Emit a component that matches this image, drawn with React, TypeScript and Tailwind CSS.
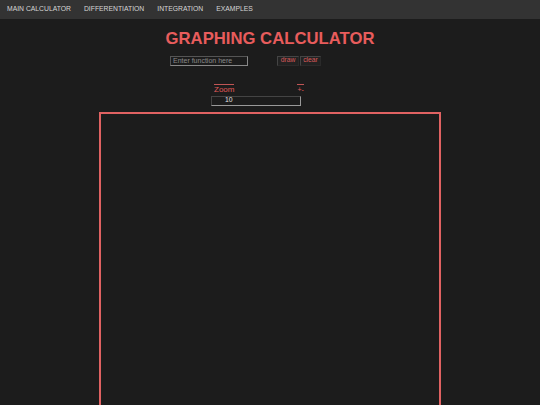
import React from "react";

export default function App() {
  const font = { fontFamily: '"Liberation Sans", Arial, sans-serif' };
  return (
    <div className="w-[540px] h-[405px] overflow-hidden bg-[#1c1c1c]" style={font}>
      <nav className="h-[19px] bg-[#333333] flex items-center text-[6.8px] text-[#d6d6d6] leading-none">
        <span className="ml-[7px]">MAIN CALCULATOR</span>
        <span className="ml-[13px]">DIFFERENTIATION</span>
        <span className="ml-[13px]">INTEGRATION</span>
        <span className="ml-[13px]">EXAMPLES</span>
      </nav>
      <h1 className="mt-[12px] text-center text-[16.7px] leading-none font-bold text-[#e85c5c]">
        GRAPHING CALCULATOR
      </h1>
      <div className="mt-[8px] flex items-center h-[10px]">
        <div className="ml-[170px] w-[78px] h-[10px] border border-t-[#555] border-l-[#555] border-b-[#888] border-r-[#888] bg-[#1c1c1c] flex items-center pl-[2px] text-[7px] text-[#8a8a8a] leading-none">
          Enter function here
        </div>
        <div className="ml-[29px] flex">
          <div className="w-[22px] h-[10px] border border-t-[#444] border-l-[#444] border-b-[#2a2a2a] border-r-[#2a2a2a] bg-[#222] flex items-center justify-center text-[6.8px] text-[#d85a5a] leading-none">
            draw
          </div>
          <div className="ml-px w-[21px] h-[10px] border border-t-[#444] border-l-[#444] border-b-[#2a2a2a] border-r-[#2a2a2a] bg-[#222] flex items-center justify-center text-[6.8px] text-[#d85a5a] leading-none">
            clear
          </div>
        </div>
      </div>
      <div className="mt-[18px] flex items-start h-[9px]">
        <div className="ml-[214px] border-t border-[#c05555] pt-[1.5px] text-[8px] leading-none text-[#e05a5a]">
          Zoom
        </div>
        <div className="ml-[63px] border-t border-[#c05555] pt-[1px] text-[7px] leading-none text-[#e05a5a]">
          +-
        </div>
      </div>
      <div className="mt-[3px] ml-[211px] w-[90px] h-[10px] border border-t-[#444] border-l-[#444] border-b-[#999] border-r-[#999] flex items-center pl-[13px] text-[6.8px] leading-none text-[#e0e0e0]">
        10
      </div>
      <div className="mt-[6px] ml-[99px] w-[342px] h-[400px] border-[2px] border-[#e06262]" />
    </div>
  );
}
